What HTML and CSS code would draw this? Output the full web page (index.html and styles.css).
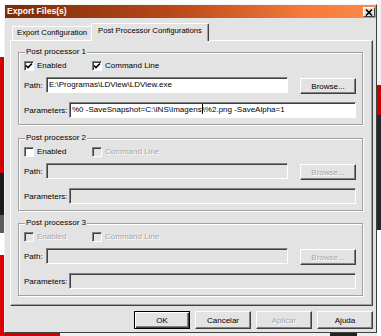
FILE: index.html
```html
<!DOCTYPE html>
<html lang="pt">
<head>
    <meta charset="UTF-8">
    <meta name="viewport" content="width=device-width, initial-scale=1.0">
    <title>Export Files(s)</title>
    <link rel="stylesheet" href="styles.css">
</head>
<body>
    <div class="dialog">
        <div class="titlebar">
            <span class="title">Export Files(s)</span>
            <button class="close-button">
                <svg width="8" height="7" viewBox="0 0 8 7"><path d="M1 0.5 L7 6.5 M7 0.5 L1 6.5" stroke="#000" stroke-width="1.6" fill="none"/></svg>
            </button>
        </div>

        <div class="tabs">
            <div class="tab">Export Configuration</div>
            <div class="tab tab-active">Post Processor Configurations</div>
        </div>

        <div class="panel">
            <!-- Post processor 1 -->
            <div class="group">
                <span class="legend">Post processor 1</span>
                <div class="check-row">
                    <label class="check check-first">
                        <span class="box"><svg width="8" height="8" viewBox="0 0 8 8"><path d="M1 3.5 L3 5.5 L7 1.5" stroke="#000" stroke-width="1.6" fill="none"/></svg></span>
                        Enabled
                    </label>
                    <label class="check">
                        <span class="box"><svg width="8" height="8" viewBox="0 0 8 8"><path d="M1 3.5 L3 5.5 L7 1.5" stroke="#000" stroke-width="1.6" fill="none"/></svg></span>
                        Command Line
                    </label>
                </div>
                <div class="field-row">
                    <span class="field-label label-path">Path:</span>
                    <div class="input input-path">E:\Programas\LDView\LDView.exe</div>
                    <button class="button browse-button">Browse...</button>
                </div>
                <div class="field-row params-row">
                    <span class="field-label label-params">Parameters:</span>
                    <div class="input input-params">%0 -SaveSnapshot=C:\INS\Imagens<span class="caret"></span>\%2.png -SaveAlpha=1</div>
                </div>
            </div>

            <!-- Post processor 2 -->
            <div class="group">
                <span class="legend">Post processor 2</span>
                <div class="check-row">
                    <label class="check check-first">
                        <span class="box"></span>
                        Enabled
                    </label>
                    <label class="check disabled">
                        <span class="box"></span>
                        Command Line
                    </label>
                </div>
                <div class="field-row">
                    <span class="field-label label-path">Path:</span>
                    <div class="input input-path disabled"></div>
                    <button class="button browse-button disabled">Browse...</button>
                </div>
                <div class="field-row params-row">
                    <span class="field-label label-params">Parameters:</span>
                    <div class="input input-params disabled"></div>
                </div>
            </div>

            <!-- Post processor 3 -->
            <div class="group">
                <span class="legend">Post processor 3</span>
                <div class="check-row">
                    <label class="check check-first disabled">
                        <span class="box"></span>
                        Enabled
                    </label>
                    <label class="check disabled">
                        <span class="box"></span>
                        Command Line
                    </label>
                </div>
                <div class="field-row">
                    <span class="field-label label-path">Path:</span>
                    <div class="input input-path disabled"></div>
                    <button class="button browse-button disabled">Browse...</button>
                </div>
                <div class="field-row params-row">
                    <span class="field-label label-params">Parameters:</span>
                    <div class="input input-params disabled"></div>
                </div>
            </div>
        </div>

        <div class="dialog-buttons">
            <button class="button button-default">OK</button>
            <button class="button">Cancelar</button>
            <button class="button disabled">Aplicar</button>
            <button class="button">Ajuda</button>
        </div>
    </div>
</body>
</html>
```

FILE: styles.css
```css
html, body {
    margin: 0;
    padding: 0;
}
body {
    width: 381px;
    height: 336px;
    overflow: hidden;
    font-family: "Liberation Sans", Arial, sans-serif;
    font-size: 8px;
    color: #000;
    background:
        linear-gradient(#fff 0 57px, #d40000 57px 173px, #1c1c1c 173px 215px, #5a5a5a 215px 233px, #fff 233px 255px, #e00000 255px) left top / 4px 100% no-repeat,
        linear-gradient(#f2f2f2 0 85px, #c80000 85px 115px, #262626 115px 230px, #fff 230px) right top / 4px 100% no-repeat,
        linear-gradient(90deg, #d40000 0 60px, #efefef 60px 330px, #222 330px 357px, #eee 357px) left bottom / 100% 3px no-repeat,
        #fff;
}
.dialog {
    box-sizing: border-box;
    width: 373px;
    height: 329px;
    margin: 4px 0 0 4px;
    background: #e3e3e3;
    border: 1px solid;
    border-color: #f4f4f4 #404040 #404040 #f4f4f4;
}
.titlebar {
    display: flex;
    align-items: flex-start;
    justify-content: space-between;
    height: 13px;
    background: linear-gradient(90deg, #7a2c0a 0%, #b84818 45%, #f27a3a 80%, #ff8a48 100%);
}
.title {
    color: #fff;
    font-weight: bold;
    font-size: 8.6px;
    line-height: 13px;
    padding-left: 2px;
}
.close-button {
    box-sizing: border-box;
    width: 12px;
    height: 10px;
    margin: 2px 1px 0 0;
    padding: 0;
    display: flex;
    align-items: center;
    justify-content: center;
    background: #e3e3e3;
    border: 1px solid;
    border-color: #fff #404040 #404040 #fff;
}
.tabs {
    display: flex;
    align-items: flex-end;
    height: 22px;
    padding-left: 7px;
    font-size: 7.7px;
}
.tab {
    box-sizing: border-box;
    height: 14px;
    line-height: 12px;
    padding: 0 4px;
    border: 1px solid;
    border-bottom: none;
    border-color: #fff #808080 transparent #fff;
    border-radius: 2px 2px 0 0;
}
.tab-active {
    position: relative;
    z-index: 1;
    height: 18px;
    margin-bottom: -1px;
    margin-left: -1px;
    padding: 0 6px;
    line-height: 14px;
    background: #e3e3e3;
    border-color: #fff #404040 transparent #fff;
    box-shadow: inset -1px 0 0 #a0a0a0;
}
.panel {
    box-sizing: border-box;
    height: 266px;
    margin: 0 3px 0 5px;
    padding: 11px 0 0 7px;
    border: 1px solid;
    border-color: #fff #404040 #404040 #fff;
    box-shadow: inset -1px -1px 0 #a0a0a0;
}
.group {
    position: relative;
    box-sizing: border-box;
    width: 345px;
    height: 73px;
    padding: 8px 0 0 5px;
    border: 1px solid #a0a0a0;
    box-shadow: inset 1px 1px 0 #fff, 1px 1px 0 #fff;
}
.group + .group {
    margin-top: 13px;
}
.group + .group + .group {
    margin-top: 12px;
}
.legend {
    position: absolute;
    top: -6px;
    left: 6px;
    padding: 0 1px;
    line-height: 10px;
    background: #e3e3e3;
}
.check-row {
    display: flex;
    height: 10px;
    margin-bottom: 6px;
}
.check {
    display: flex;
    align-items: center;
    gap: 3px;
    line-height: 10px;
}
.check-first {
    width: 68px;
}
.box {
    box-sizing: border-box;
    width: 10px;
    height: 10px;
    display: flex;
    align-items: center;
    justify-content: center;
    background: #fff;
    border: 1px solid;
    border-color: #808080 #fff #fff #808080;
    box-shadow: inset 1px 1px 0 #404040;
}
.check.disabled {
    color: #a6a6a6;
    text-shadow: 1px 1px 0 #fff;
}
.check.disabled .box {
    background: #e3e3e3;
}
.field-row {
    display: flex;
    align-items: flex-start;
    height: 16px;
}
.params-row {
    margin-top: 9px;
}
.field-label {
    line-height: 16px;
    padding-top: 1px;
}
.label-path {
    width: 22px;
}
.label-params {
    width: 45px;
}
.input {
    box-sizing: border-box;
    height: 16px;
    padding: 0 2px;
    line-height: 14px;
    white-space: nowrap;
    overflow: hidden;
    background: #fff;
    border: 1px solid;
    border-color: #808080 #fff #fff #808080;
    box-shadow: inset 1px 1px 0 #404040;
}
.input.disabled {
    background: #e3e3e3;
}
.input-path {
    width: 242px;
}
.input-params {
    width: 287px;
}
.caret {
    display: inline-block;
    width: 1px;
    height: 10px;
    vertical-align: -2px;
    background: #000;
}
.button {
    box-sizing: border-box;
    width: 56px;
    height: 18px;
    padding: 0;
    font-family: "Liberation Sans", Arial, sans-serif;
    font-size: 8px;
    color: #000;
    background: #e3e3e3;
    border: 1px solid;
    border-color: #fff #404040 #404040 #fff;
    box-shadow: inset -1px -1px 0 #808080;
}
.button.disabled {
    color: #a6a6a6;
    text-shadow: 1px 1px 0 #fff;
}
.button-default {
    border-color: #000;
    box-shadow: inset 1px 1px 0 #fff, inset -1px -1px 0 #404040, inset -2px -2px 0 #808080;
}
.browse-button {
    height: 16px;
    margin: 1px 0 0 12px;
}
.dialog-buttons {
    display: flex;
    justify-content: flex-end;
    gap: 5px;
    margin: 5px 3px 0 0;
}
```
